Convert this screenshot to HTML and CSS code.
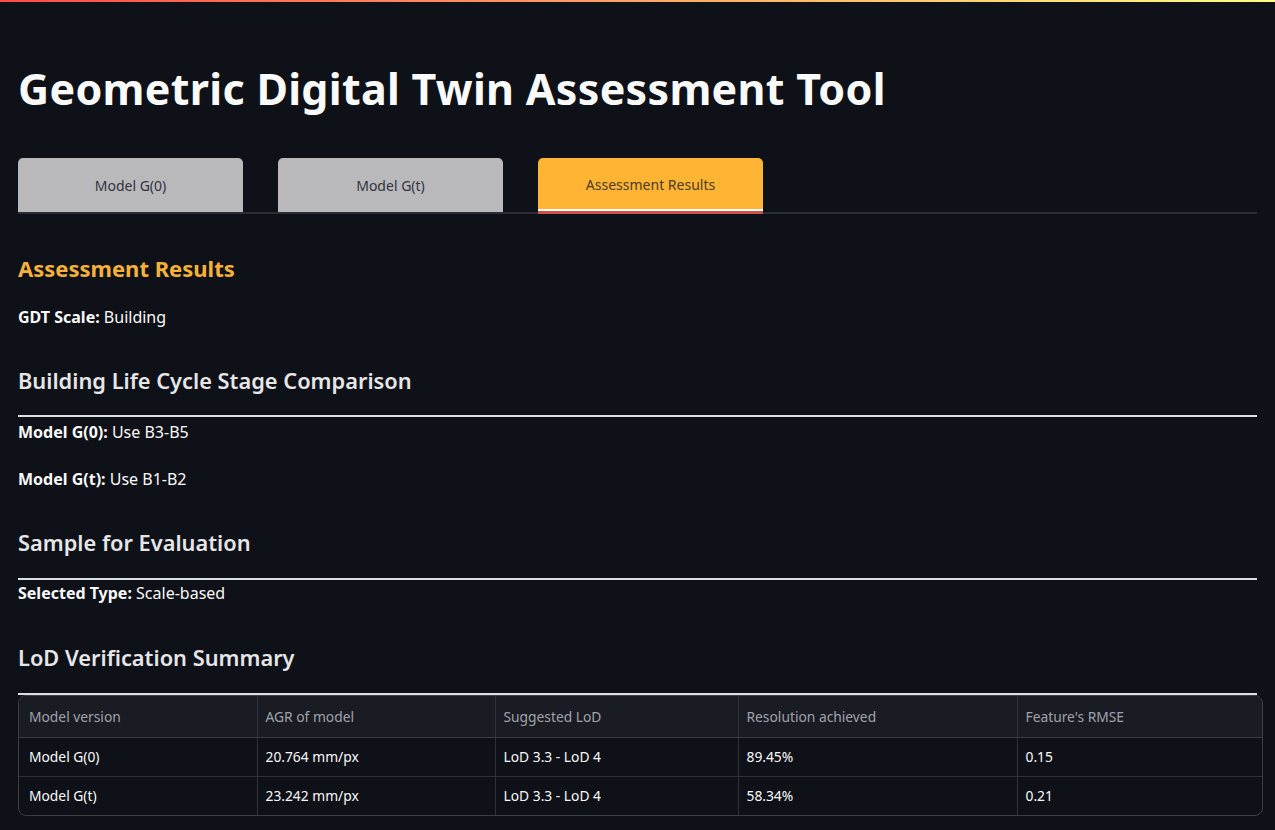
FILE: index.html
```html
<!DOCTYPE html>
<html lang="en">
<head>
<meta charset="utf-8">
<title>Geometric Digital Twin Assessment Tool</title>
<link rel="stylesheet" href="styles.css">
</head>
<body>
<div class="topbar"></div>
<main class="main">
  <h1 class="title">Geometric Digital Twin Assessment Tool</h1>

  <div class="tabs">
    <div class="tab">Model G(0)</div>
    <div class="tab">Model G(t)</div>
    <div class="tab tab-active">Assessment Results</div>
  </div>

  <h3 class="results-title">Assessment Results</h3>
  <p class="line p-gdt"><b>GDT Scale:</b> Building</p>

  <h2 class="section s-lifecycle">Building Life Cycle Stage Comparison</h2>
  <hr class="divider">
  <p class="line p-g0"><b>Model G(0):</b> Use B3-B5</p>
  <p class="line p-gt"><b>Model G(t):</b> Use B1-B2</p>

  <h2 class="section s-sample">Sample for Evaluation</h2>
  <hr class="divider">
  <p class="line p-sel"><b>Selected Type:</b> Scale-based</p>

  <h2 class="section s-lod">LoD Verification Summary</h2>
  <hr class="divider">

  <div class="table-wrap">
    <table class="table">
      <colgroup>
        <col class="c1"><col class="c2"><col class="c3"><col class="c4"><col class="c5">
      </colgroup>
      <thead>
        <tr>
          <th>Model version</th>
          <th>AGR of model</th>
          <th>Suggested LoD</th>
          <th>Resolution achieved</th>
          <th>Feature's RMSE</th>
        </tr>
      </thead>
      <tbody>
        <tr>
          <td>Model G(0)</td>
          <td>20.764 mm/px</td>
          <td>LoD 3.3 - LoD 4</td>
          <td>89.45%</td>
          <td>0.15</td>
        </tr>
        <tr>
          <td>Model G(t)</td>
          <td>23.242 mm/px</td>
          <td>LoD 3.3 - LoD 4</td>
          <td>58.34%</td>
          <td>0.21</td>
        </tr>
      </tbody>
    </table>
  </div>
</main>
</body>
</html>
```

FILE: styles.css
```css
* { box-sizing: border-box; }

html, body {
  margin: 0;
  padding: 0;
  background: #0e1117;
  color: #fafafa;
  font-family: "Noto Sans", "Open Sans", sans-serif;
}

body { height: 830px; overflow: hidden; }

.topbar {
  height: 2px;
  background: linear-gradient(90deg, #ff4b4b, #fffd80);
}

.main {
  width: 1257px;
  padding-left: 18px;
}

.title {
  margin: 61px 0 0;
  font-size: 43px;
  line-height: 52px;
  font-weight: 700;
  letter-spacing: 0.3px;
  color: #fafafa;
}

.tabs {
  margin-top: 43px;
  display: flex;
  gap: 35px;
  border-bottom: 2px solid #2a2d35;
  height: 56px;
}

.tab {
  position: relative;
  width: 225px;
  height: 54px;
  background: #b9b9bb;
  border-radius: 5px 5px 0 0;
  display: flex;
  align-items: center;
  justify-content: center;
  font-size: 14px;
  color: #31333f;
}

.tab-active {
  background: #ffb433;
  border-bottom: 3px solid #ffffff;
  padding-top: 1px;
  color: #4a3c25;
}

.tab-active::after {
  content: "";
  position: absolute;
  left: 0;
  right: 0;
  bottom: -5px;
  height: 3px;
  background: #cf514d;
}

.results-title {
  margin: 39px 0 0;
  font-size: 22px;
  line-height: 30px;
  font-weight: 700;
  color: #f6b13a;
}

.line {
  margin: 0;
  font-size: 16px;
  line-height: 24px;
  color: #fafafa;
}

.line b { font-weight: 700; }

.p-gdt { margin-top: 22px; }
.p-g0 { margin-top: 3px; }
.p-gt { margin-top: 23px; }
.p-sel { margin-top: 1px; }

.section {
  margin: 0;
  font-size: 21.8px;
  line-height: 32px;
  font-weight: 600;
  color: #e6e6e8;
}

.s-lifecycle { margin-top: 36px; }
.s-sample { margin-top: 36px; }
.s-lod { margin-top: 37px; }

.divider {
  margin: 18px 0 0;
  border: 0;
  height: 2px;
  background: #dedfe3;
}

.s-sample + .divider { margin-top: 19px; }
.s-lod + .divider { margin-top: 19px; }

.table-wrap {
  width: 1245px;
  border: 1px solid #3c3e46;
  border-radius: 8px;
  overflow: hidden;
}

.table {
  width: 100%;
  border-collapse: collapse;
  table-layout: fixed;
  font-size: 13.8px;
}

.c1 { width: 238px; }
.c2 { width: 238px; }
.c3 { width: 243px; }
.c4 { width: 279px; }
.c5 { width: auto; }

.table th, .table td {
  text-align: left;
  padding: 0 0 0 8px;
  border-right: 1px solid #2f3139;
  border-bottom: 1px solid #2f3139;
  white-space: nowrap;
}

.table th:first-child, .table td:first-child { padding-left: 10px; }
.table th:last-child, .table td:last-child { border-right: 0; }
.table tbody tr:last-child td { border-bottom: 0; }

.table th {
  height: 41px;
  background: #1a1c24;
  color: #a0a3ab;
  font-weight: 400;
  border-bottom-color: #3a3c44;
}

.table td {
  height: 39px;
  color: #fafafa;
}
```
